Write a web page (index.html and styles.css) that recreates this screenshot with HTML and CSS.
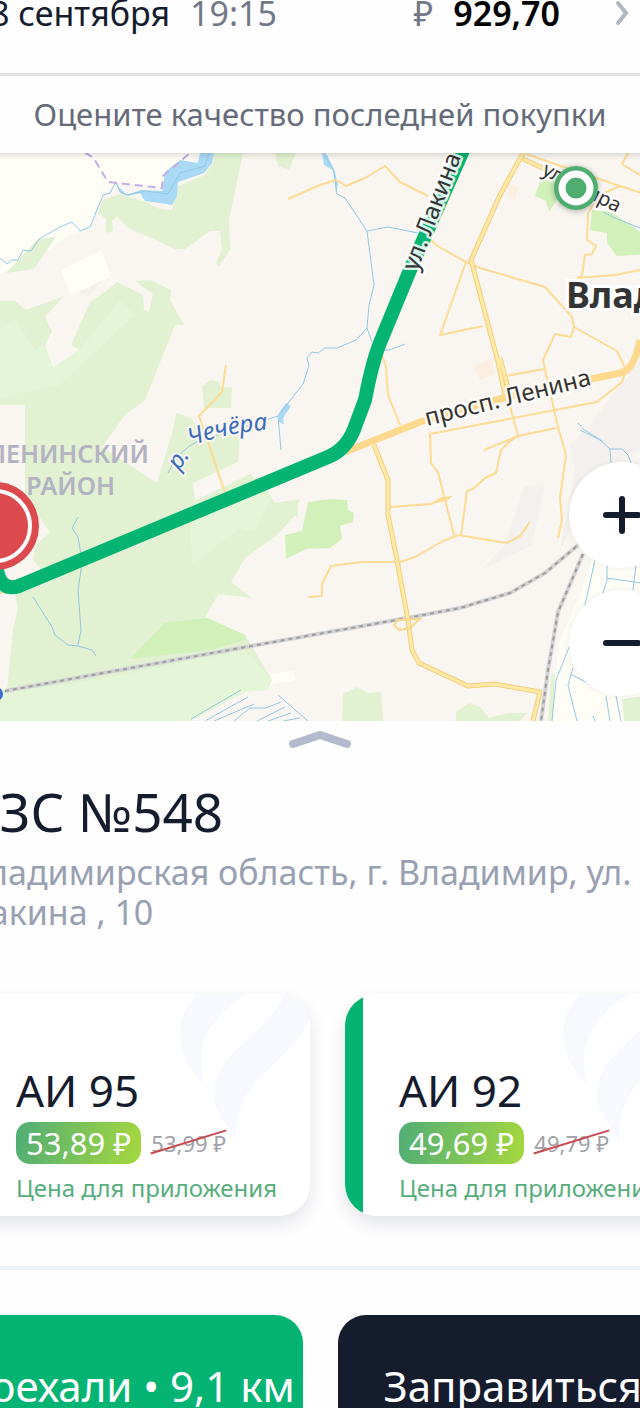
FILE: index.html
```html
<!DOCTYPE html>
<html lang="ru">
<head>
    <meta charset="UTF-8">
    <meta name="viewport" content="width=device-width, initial-scale=1.0">
    <title>АЗС №548</title>
    <link rel="stylesheet" href="styles.css">
</head>
<body>
    <div class="screen">
        <header class="purchase">
            <a href="#purchase" class="purchase-row">
                <span class="purchase-date">8 сентября</span>
                <span class="purchase-time">19:15</span>
                <span class="purchase-currency">₽</span>
                <strong class="purchase-sum">929,70</strong>
                <svg class="purchase-arrow" viewBox="0 0 16 26" aria-hidden="true"><path d="M4 3l8 10-8 10"/></svg>
            </a>
            <a href="#rate" class="purchase-rate">Оцените качество последней покупки</a>
        </header>

        <section class="map">
            <svg class="map-canvas" viewBox="-48 153 736 568" preserveAspectRatio="xMidYMid slice">
                <!-- fields -->
                <g class="field">
                    <path d="M-48 153H86L108 182 116 184 103 195 90 228 70 234 40 256 0 274-48 280z"/>
                    <path d="M86 153L108 182 162 188 164 175 198 153z"/>
                    <path d="M61 270L101 250 111 277 70 295z"/>
                    <path d="M560 640L578 600 592 560 640 560 688 560V721H550L555 680z"/>
                    <path d="M245 692L250 676 293 671 295 680 272 684 268 690z"/>
                </g>
                <!-- forest and parks -->
                <g class="forest">
                    <path d="M243 153L229 220 230 250 219 266 216 263 222 249 220 231H210L185 249H175L127 227 117 216 112 221 113 231 106 233V219L98 213 103 200 120 194 145 202 160 209 172 210 178 186 205 175 214 160V153z"/>
                    <path d="M275 153L278 166 289 170 296 153z"/>
                    <path d="M38 239L56 237 34 269 6 273z"/>
                    <path d="M-48 301H15L26 310 64 296 45 317 52 331 45 345 53 368 79 350 71 345 90 302 105 292 117 282 143 295 144 310 149 312 153 294 135 281 150 280 171 290 170 300 184 325H175L145 400 125 415 102 447 157 483 173 430 176 413 191 418 204 436 240 430 238 462 193 483 195 501 250 474 266 488 275 503 300 499 293 518 277 535 245 558 231 582 252 598 218 594 203 622 245 635 272 680 268 690 245 692 190 721H-48V690L7 690 13 630 18 608 14 590 42 570 33 560 36 545 50 532 40 518 25 500V405L-48 404z"/>
                    <path d="M202 386L210 380 218 381 221 387 232 387 231 408H204z"/>
                    <path d="M343 694L357 687 368 693 381 692 383 721H342z"/>
                    <path d="M456 712L469 703 480 707 489 718 508 713 527 713 520 721H456z"/>
                    <path d="M286 502L298 506V518L290 512z"/>
                    <path d="M551 675L555 673 554 690 553 721H548z"/>
                    <path d="M622 699L688 690V721H624z"/>
                    <path d="M637 393L650 388V410L640 402z"/>
                </g>
                <g class="park">
                    <path d="M165 623L208 618 245 635 246 640 210 650 130 659z"/>
                    <path d="M285 535L302 531 308 502 330 499 347 500 348 510 354 513 353 522 340 526 342 539 330 548 306 549 286 559z"/>
                    <path d="M540 181L553 178 560 195 549 212 546 201 535 196z"/>
                    <path d="M592 210L612 212 640 232 688 240V252L617 256 607 243V233L590 230z"/>
                </g>
                <g class="forest-light">
                    <path d="M-48 330L0 330 15 318 35 350 45 345 53 368 79 350 120 300 135 315 60 385 0 398-48 400z"/>
                    <path d="M190 520L255 480 270 500 255 532 240 528 192 565z"/>
                    <path d="M-48 700L95 680 245 650 272 680 268 690 245 692 190 721H-48z"/>
                </g>
                <g class="urban">
                    <path d="M524 487L545 484 532 545 481 570 505 545z"/>
                    <path d="M570 445L590 425 640 360V450L600 470 560 550 575 470z"/>
                    <path d="M80 292L102 280 90 296z"/>
                </g>
                <g class="block">
                    <path d="M509 182L518 188 515 200 507 196z"/>
                    <path d="M473 366L492 359 495 374 480 380z"/>
                </g>

                <!-- water -->
                <g class="lake">
                    <path d="M200 153L198 163 180 160 165 172 162 191 141 190 127 195 118 186 120 193 128 196 140 193 145 201 160 203 172 205 177 196 178 182 204 173 212 163 214 153z"/>
                    <path d="M322 153L324 165 333 170 336 193 338 184 334 169 327 155z"/>
                    <path d="M279 413L286 403 291 406 283 418 284 424 279 422z"/>
                </g>
                <g class="river">
                    <path d="M-48 262L0 258 7 264 12 260H18L23 250 31 251 39 239 60 227 72 222 80 231 90 227 103 195 110 193 116 182 120 192 127 195 145 191 168 194 180 173 205 166 209 153"/>
                    <path d="M324 153L334 172 337 194 345 198 367 231 374 285 369 305 367 328 372 342M367 231L388 227 418 233M367 328L356 340 337 348H325L318 353 312 352 307 358 309 366 303 384 278 416 281 450M405 344L390 350 380 350"/>
                    <path d="M168 473Q178 450 200 440 235 430 278 416"/>
                    <path d="M78 517L72 528 78 537 81 555V570L78 590 81 630 78 645M33 597L52 627 55 635 68 645 78 646 92 650 96 656"/>
                    <path d="M578 423L583 429 602 441M580 430L600 440 610 449H622L628 455 631 463M610 449L611 463M595 560L585 605 568 650 556 680 552 721M607 565V580L603 593M607 578L688 590M636 565L633 590M573 668L568 685 577 721M570 674L586 682M606 696L610 721M616 696L621 721M593 716L595 721M603 212L615 218 640 228"/>
                    <path d="M191 719L241 690M205 721L248 697M214 721L254 704M234 721L250 708 266 708 281 702M257 721L285 707M268 721L291 713M278 695L308 721M283 721L300 718"/>
                </g>

                <path class="boundary" d="M85 153L93 157 108 182 162 188 163 176 190 153"/>

                <!-- railway -->
                <g class="rail">
                    <path d="M5 691L240 648 407 618 460 608 510 593 545 573 590 535"/>
                    <path d="M583 554L558 612 548 670 541 721"/>
                </g>
                <g class="rail-ties">
                    <path d="M5 691L240 648 407 618 460 608 510 593 545 573 590 535"/>
                    <path d="M583 554L558 612 548 670 541 721"/>
                </g>

                <!-- streets -->
                <g class="street">
                    <path d="M288 199L320 185 336 180 346 186 365 178 385 166 400 182 428 196M430 239L436 245 466 262 480 268 545 287 572 317 574 327 571 337 555 334 543 360 557 423 566 455 560 498 562 520 558 538"/>
                    <path d="M466 262L440 335 483 326M574 327L617 351 626 370 622 382 597 402 430 434 431 463 438 472 454 535M506 376L544 369M510 406L518 436M484 450L518 436 556 428"/>
                    <path d="M382 355L386 367 388 395 400 425"/>
                    <path d="M526 154L620 186 688 208M628 153L622 164 640 175M620 186L600 195 588 213 587 240 596 246 592 254 585 255 582 275 578 278 615 275 640 270"/>
                    <path d="M308 597L322 596V584L331 566 362 562 400 562 415 557 443 541 458 535 507 543 520 536 530 522M461 535L467 491 473 489 485 478 496 473 501 450 508 443 518 436M390 507L431 504 445 498"/>
                    <path d="M226 365L222 392 199 416 208 442 225 493"/>
                    <path d="M363 395L360 430 350 445 325 463M0 593L15 590"/>
                </g>
                <path class="junction" d="M430 504L441 497 453 496 446 501z"/>
                <g class="avenue-edge">
                    <path d="M523 153L500 195 471 260 498 362 505 395M500 358L510 395M374 445L388 480V515L397 560 408 620 412 650 419 663 468 686 495 684 540 692 533 721M523 159L560 176"/>
                </g>
                <g class="avenue">
                    <path d="M523 153L500 195 471 260 498 362 505 395M500 358L510 395M374 445L388 480V515L397 560 408 620 412 650 419 663 468 686 495 684 540 692 533 721M523 159L560 176"/>
                </g>
                <path class="interchange" d="M394 625L398 620 420 619 410 628 399 630z"/>
                <path class="highway" d="M345 452L420 422 510 396 620 373Q634 371 640 340"/>

                <path class="route" d="M-4 560Q-3 593 19 586L328 457Q348 449 356 424L365 400Q373 358 382 338L410 270 464 148"/>

                <!-- labels -->
                <g class="label">
                    <text transform="translate(417 272) rotate(-69)">ул. Лакина</text>
                    <text transform="translate(427 426) rotate(-14)">просп. Ленина</text>
                    <text class="label-small" transform="translate(541 174) rotate(27)">ул. Мира</text>
                </g>
                <text class="label-city" x="566" y="308">Владимир</text>
                <text class="label-district" x="149" y="463" text-anchor="end">ЛЕНИНСКИЙ</text>
                <text class="label-district" x="115" y="495" text-anchor="end">РАЙОН</text>
                <path id="river-name" class="label-path" d="M191 446Q230 431 290 428"/>
                <text class="label-river" transform="translate(179 471) rotate(-55)">р.</text>
                <text class="label-river"><textPath href="#river-name">Чечёра</textPath></text>

                <!-- markers -->
                <circle cx="-5" cy="526" r="44" fill="#dc4a4d"/>
                <circle cx="-5" cy="526" r="35" fill="none" stroke="#fff" stroke-width="4"/>
                <circle class="marker-me" cx="576" cy="188" r="22"/>
                <circle cx="576" cy="188" r="14" fill="#50ad70" stroke="#fff" stroke-width="7"/>
                <circle cx="-4" cy="694" r="7" fill="#3b6fd4"/>
            </svg>
            <div class="map-zoom">
                <button class="zoom-button" aria-label="Приблизить">
                    <svg viewBox="0 0 38 38" aria-hidden="true"><path d="M3 19h32M19 3v32"/></svg>
                </button>
                <button class="zoom-button" aria-label="Отдалить">
                    <svg viewBox="0 0 38 38" aria-hidden="true"><path d="M3 19h32"/></svg>
                </button>
            </div>
        </section>

        <main class="sheet">
            <button class="sheet-handle" aria-label="Развернуть">
                <svg viewBox="0 0 62 18" aria-hidden="true"><path d="M4 14L31 5 58 14"/></svg>
            </button>

            <div class="station">
                <h1 class="station-name">АЗС №548</h1>
                <p class="station-address">Владимирская область, г. Владимир, ул.<br>Лакина , 10</p>
            </div>

            <div class="fuels">
                <button class="fuel">
                    <svg class="fuel-flame" viewBox="0 0 130 150" aria-hidden="true">
                        <path d="M17 0C-6 24-8 58 25 93 14 60 22 28 67 0zM105 0C86 42 34 58 34 100 34 120 48 130 57 147 52 100 84 82 108 56 120 43 127 32 130 22V0z"/>
                    </svg>
                    <span class="fuel-name">АИ 95</span>
                    <span class="fuel-prices">
                        <span class="fuel-price">53,89 ₽</span>
                        <span class="fuel-old">53,99 ₽</span>
                    </span>
                    <span class="fuel-note">Цена для приложения</span>
                </button>
                <button class="fuel">
                    <svg class="fuel-flame" viewBox="0 0 130 150" aria-hidden="true">
                        <path d="M17 0C-6 24-8 58 25 93 14 60 22 28 67 0zM105 0C86 42 34 58 34 100 34 120 48 130 57 147 52 100 84 82 108 56 120 43 127 32 130 22V0z"/>
                    </svg>
                    <span class="fuel-name">АИ 92</span>
                    <span class="fuel-prices">
                        <span class="fuel-price">49,69 ₽</span>
                        <span class="fuel-old">49,79 ₽</span>
                    </span>
                    <span class="fuel-note">Цена для приложения</span>
                </button>
            </div>

            <div class="actions">
                <button class="action action-go">Поехали • 9,1 км</button>
                <button class="action action-fill">Заправиться</button>
            </div>
        </main>
    </div>
</body>
</html>
```
FILE: styles.css
```css
* {
    box-sizing: border-box;
}
body {
    margin: 0;
    height: 100vh;
    overflow: hidden;
    background: #fefefe;
    color: #141c2e;
    font-family: "Noto Sans", "Open Sans", sans-serif;
}
button {
    padding: 0;
    border: none;
    background: none;
    color: inherit;
    font: inherit;
    cursor: pointer;
}
a {
    color: inherit;
    text-decoration: none;
}
/* the screen bleeds past both edges of the window */
.screen {
    margin: 0 -48px;
}

/* last purchase */
.purchase {
    position: relative;
    z-index: 1;
    background: #fefefe;
    box-shadow: 0 2px 6px rgba(0, 0, 0, 0.15);
}
.purchase-row {
    display: flex;
    align-items: center;
    height: 76px;
    padding: 0 58px 48px 38px;
    border-bottom: 3px solid #e0e1e3;
    font-size: 34px;
    line-height: 28px;
}
.purchase-time {
    margin-left: 20px;
    color: #727888;
}
.purchase-currency {
    margin-left: auto;
    color: #727888;
}
.purchase-sum {
    margin-left: 20px;
    color: #000;
    font-weight: 600;
}
.purchase-arrow {
    width: 16px;
    height: 26px;
    margin-left: 54px;
    fill: none;
    stroke: #b0b8c4;
    stroke-width: 4;
    stroke-linecap: round;
}
.purchase-rate {
    display: block;
    padding: 18px 0 19px;
    color: #656b78;
    font-size: 31px;
    line-height: 40px;
    text-align: center;
}

/* map */
.map {
    position: relative;
    overflow: hidden;
}
.map-canvas {
    display: block;
    width: 100%;
    height: 568px;
    background: #f9f6f1;
}
.map-canvas g {
    stroke-linejoin: round;
}
.field {
    fill: #fefef6;
}
.forest {
    fill: #e1f1d2;
}
.forest-light {
    fill: #e5f5d8;
}
.park {
    fill: #d2f0ba;
}
.urban {
    fill: #f3f0ed;
}
.block {
    fill: #fdeee2;
}
.lake {
    fill: #a9d9f5;
}
.river {
    fill: none;
    stroke: #93c8e2;
    stroke-width: 1;
}
.boundary {
    fill: none;
    stroke: #c3aee6;
    stroke-width: 2;
    stroke-dasharray: 8 5;
}
.rail {
    fill: none;
    stroke: #d2d2d2;
    stroke-width: 4;
}
.rail-ties {
    fill: none;
    stroke: #9d9d9d;
    stroke-width: 2;
    stroke-dasharray: 4 4;
}
.street {
    fill: none;
    stroke: #fcdb94;
    stroke-width: 2;
}
.junction {
    fill: #fcdb94;
}
.interchange {
    fill: none;
    stroke: #f8d88a;
    stroke-width: 2;
}
.avenue-edge {
    fill: none;
    stroke: #f3ce83;
    stroke-width: 5;
}
.avenue {
    fill: none;
    stroke: #fdeaa5;
    stroke-width: 3;
}
.highway {
    fill: none;
    stroke: #fcd98c;
    stroke-width: 7;
}
.route {
    fill: none;
    stroke: #05b473;
    stroke-width: 14;
}
.label {
    fill: #343434;
    stroke: rgba(255, 255, 255, 0.85);
    stroke-width: 5;
    paint-order: stroke;
    font-size: 24px;
}
.label-small {
    font-size: 20px;
}
.label-city {
    fill: #343434;
    stroke: #fff;
    stroke-width: 6;
    paint-order: stroke;
    font-size: 36px;
    font-weight: 700;
}
.label-district {
    fill: #b3b3c2;
    font-size: 25px;
    font-weight: 600;
}
.label-path {
    fill: none;
}
.label-river {
    fill: #3c6cb8;
    stroke: #f9f6f1;
    stroke-width: 4;
    paint-order: stroke;
    font-size: 24px;
    font-style: italic;
}
.marker-me {
    fill: #50ad70;
    filter: drop-shadow(0 1px 3px rgba(0, 0, 0, 0.3));
}
.map-zoom {
    position: absolute;
    right: 13px;
    bottom: 25px;
    display: grid;
    gap: 22px;
}
.zoom-button {
    display: grid;
    place-items: center;
    width: 106px;
    height: 106px;
    border-radius: 50%;
    background: #fff;
    box-shadow: 0 0 6px rgba(0, 0, 0, 0.08);
}
.zoom-button svg {
    width: 38px;
    height: 38px;
    stroke: #141c2e;
    stroke-width: 6;
    stroke-linecap: round;
}

/* station sheet */
.sheet-handle {
    display: block;
    width: 62px;
    height: 18px;
    margin: 9px auto 0;
}
.sheet-handle svg {
    display: block;
    fill: none;
    stroke: #b3bacb;
    stroke-width: 8;
    stroke-linecap: round;
}
.station {
    padding: 32px 14px 0;
}
.station-name {
    margin: 0;
    font-size: 53px;
    font-weight: 400;
    line-height: 64px;
}
.station-address {
    margin: 8px 0 0;
    color: #98a1b2;
    font-size: 34px;
    line-height: 40px;
    white-space: nowrap;
}
.fuels {
    display: flex;
    gap: 35px;
    padding: 62px 0 50px 10px;
    border-bottom: 4px solid #edf2f8;
    overflow: hidden;
}
.fuel {
    position: relative;
    flex: 0 0 348px;
    display: flex;
    flex-direction: column;
    align-items: flex-start;
    padding: 68px 0 12px 54px;
    border-radius: 32px;
    background: linear-gradient(90deg, #05b473 18px, #fff 18px);
    box-shadow: 0 8px 18px rgba(30, 40, 80, 0.12);
    overflow: hidden;
    text-align: left;
    white-space: nowrap;
}
.fuel-flame {
    position: absolute;
    top: 0;
    right: 0;
    width: 130px;
    height: 150px;
    fill: #f8f9fe;
}
.fuel-name,
.fuel-prices,
.fuel-note {
    position: relative;
}
.fuel-name {
    font-size: 44px;
    line-height: 56px;
}
.fuel-prices {
    display: flex;
    align-items: center;
    gap: 10px;
    margin: 4px 0 8px;
}
.fuel-price {
    padding: 0 10px;
    border-radius: 14px;
    background: linear-gradient(100deg, #50ad77, #a5d83e);
    color: #fff;
    font-size: 31px;
    line-height: 42px;
}
.fuel-old {
    position: relative;
    color: #a0a2a8;
    font-size: 22px;
    line-height: 28px;
}
.fuel-old::after {
    content: "";
    position: absolute;
    top: 12px;
    left: -2px;
    right: -2px;
    height: 2px;
    background: #c94a50;
    transform: rotate(-17deg);
}
.fuel-note {
    color: #57ad7c;
    font-size: 24px;
    line-height: 32px;
}
.actions {
    display: grid;
    grid-template-columns: 1fr 1fr;
    gap: 35px;
    padding-top: 45px;
}
.action {
    height: 140px;
    border-radius: 28px;
    color: #fff;
    font-size: 42px;
    white-space: nowrap;
}
.action-go {
    background: #05b473;
}
.action-fill {
    background: #141c2e;
}
```
